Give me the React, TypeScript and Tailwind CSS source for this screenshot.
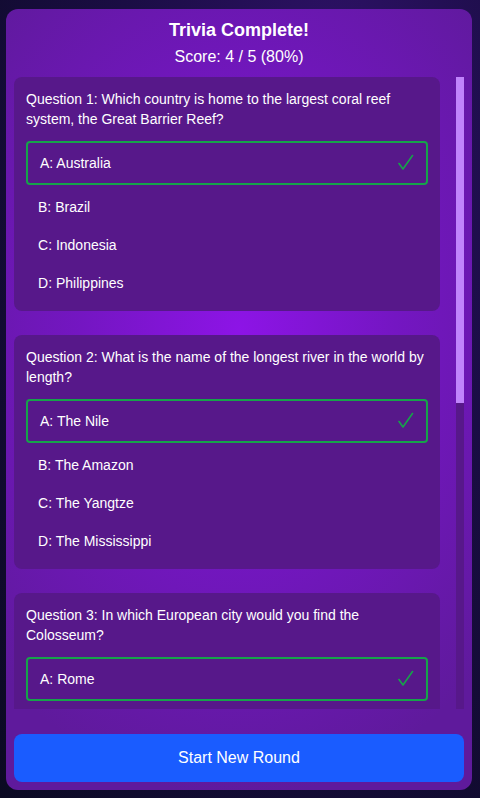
import React from "react";

type Question = {
    text: string;
    options: string[];
    correct: number;
    picked: number;
};

const questions: Question[] = [
    {
        text: "Which country is home to the largest coral reef system, the Great Barrier Reef?",
        options: ["Australia", "Brazil", "Indonesia", "Philippines"],
        correct: 0,
        picked: 0,
    },
    {
        text: "What is the name of the longest river in the world by length?",
        options: ["The Nile", "The Amazon", "The Yangtze", "The Mississippi"],
        correct: 0,
        picked: 0,
    },
    {
        text: "In which European city would you find the Colosseum?",
        options: ["Rome", "Athens", "Paris", "Madrid"],
        correct: 0,
        picked: 0,
    },
    {
        text: "What is the chemical symbol for gold?",
        options: ["Au", "Ag", "Gd", "Go"],
        correct: 0,
        picked: 0,
    },
    {
        text: "Who painted the Mona Lisa?",
        options: ["Michelangelo", "Leonardo da Vinci", "Raphael", "Donatello"],
        correct: 1,
        picked: 0,
    },
];

const letters = ["A", "B", "C", "D"];

function Check() {
    return (
        <svg width="16" height="18" viewBox="0 0 16 18" fill="none" className="shrink-0">
            <polyline points="1,9.5 5,15 14.5,1.5" stroke="#16a34a" strokeWidth="1.6" strokeLinecap="round" strokeLinejoin="round" />
        </svg>
    );
}

function Cross() {
    return (
        <svg width="16" height="18" viewBox="0 0 16 18" fill="none" className="shrink-0">
            <path d="M2 3 L14 15 M14 3 L2 15" stroke="#dc2626" strokeWidth="1.6" strokeLinecap="round" />
        </svg>
    );
}

function QuestionCard({ q, index }: { q: Question; index: number }) {
    return (
        <div className="shrink-0 rounded-lg bg-[#57188a] p-3">
            <p className="text-[14px] leading-5 text-white">
                Question {index + 1}: {q.text}
            </p>
            <div className="mt-3 flex flex-col gap-1.5">
                {q.options.map((opt, i) => {
                    const isCorrect = i === q.correct;
                    const isWrongPick = i === q.picked && !isCorrect;
                    if (isCorrect || isWrongPick) {
                        return (
                            <div
                                key={i}
                                className={
                                    isCorrect
                                        ? "flex items-center justify-between rounded border-2 border-[#16a34a] px-3 py-[10px] text-[14px] leading-5 text-white"
                                        : "flex items-center justify-between rounded border-2 border-[#dc2626] px-3 py-[10px] text-[14px] leading-5 text-white"
                                }
                            >
                                <span>
                                    {letters[i]}: {opt}
                                </span>
                                {isCorrect ? <Check /> : <Cross />}
                            </div>
                        );
                    }
                    return (
                        <div key={i} className="px-3 py-1.5 text-[14px] leading-5 text-white">
                            {letters[i]}: {opt}
                        </div>
                    );
                })}
            </div>
        </div>
    );
}

export default function App() {
    return (
        <div
            className="h-[798px] w-[480px] overflow-hidden bg-[radial-gradient(ellipse_at_70%_10%,#2d1166_0%,#1a0d44_45%,#0b0a22_100%)] pl-[6px] pt-[9px]"
            style={{ fontFamily: '"Liberation Sans", Arial, sans-serif' }}
        >
            {/* Results card */}
            <div className="flex h-[781px] w-[466px] flex-col rounded-xl bg-[radial-gradient(ellipse_75%_60%_at_50%_41%,#8d14e6_0%,#7416c2_45%,#5f1a9c_100%)] p-2">
                <h1 className="text-center text-[18px] font-bold leading-[26px] text-white">Trivia Complete!</h1>
                <div className="mt-[2px] text-center text-[16px] leading-6 text-white">Score: 4 / 5 (80%)</div>

                {/* Question review list with its scrollbar */}
                <div className="mt-2 flex min-h-0 flex-1 gap-4">
                    <div className="flex min-w-0 flex-1 flex-col gap-6 overflow-hidden">
                        {questions.map((q, i) => (
                            <QuestionCard key={i} q={q} index={i} />
                        ))}
                    </div>
                    <div className="w-2 shrink-0 bg-[#57188a]">
                        <div className="h-[326px] bg-[#c084fc]" />
                    </div>
                </div>

                <button className="mt-[25px] h-12 w-full shrink-0 rounded-lg bg-[#1a5cff] text-[16px] text-white">
                    Start New Round
                </button>
            </div>
        </div>
    );
}
